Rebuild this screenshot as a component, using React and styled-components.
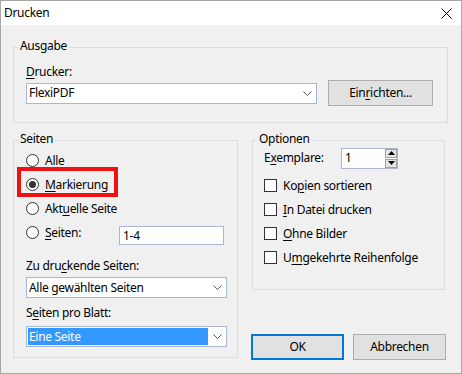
import React from "react";
import styled, { createGlobalStyle } from "styled-components";

const GlobalStyle = createGlobalStyle`
  html, body {
    margin: 0;
    padding: 0;
    background: #ffffff;
  }
  body {
    font-family: "Noto Sans", "Open Sans", sans-serif;
    font-size: 12px;
    letter-spacing: -0.3px;
    color: #000000;
  }
  * {
    box-sizing: border-box;
  }
`;

const Window = styled.div`
  width: 462px;
  height: 374px;
  border: 1px solid #a6a6a6;
  display: flex;
  flex-direction: column;
  background: #f0f0f0;
`;

const TitleBar = styled.div`
  height: 24px;
  background: #ffffff;
  display: flex;
  align-items: center;
  justify-content: space-between;
  padding: 0 9px 0 3px;
  line-height: 16px;
`;

const Body = styled.div`
  flex: 1;
  padding: 22px 13px 0 12px;
`;

const Group = styled.div`
  position: relative;
  border: 1px solid #dcdcdc;
  width: ${({ $w }) => ($w ? `${$w}px` : "auto")};
  height: ${({ $h }) => ($h ? `${$h}px` : "auto")};
  padding: ${({ $pad }) => $pad};
  margin-left: ${({ $ml }) => $ml || 0}px;
`;

const Legend = styled.div`
  position: absolute;
  top: -10px;
  left: 4px;
  padding: 0 2px;
  background: #f0f0f0;
  line-height: 16px;
`;

const Label = styled.div`
  line-height: 16px;
  height: 16px;
  margin-top: ${({ $mt }) => $mt || 0}px;
  width: ${({ $w }) => ($w ? `${$w}px` : "auto")};
  flex-shrink: 0;
`;

const Mn = styled.span`
  text-decoration: underline;
  text-underline-offset: 2px;
`;

const Row = styled.div`
  display: flex;
  align-items: center;
  gap: ${({ $gap }) => $gap || 0}px;
  height: ${({ $h }) => ($h ? `${$h}px` : "auto")};
  margin-top: ${({ $mt }) => $mt || 0}px;
`;

const LowerRow = styled.div`
  display: flex;
  gap: 13px;
  margin-top: 17px;
`;

const RightColumn = styled.div`
  width: 196px;
  display: flex;
  flex-direction: column;
`;

const SelectBox = styled.div`
  display: flex;
  align-items: stretch;
  width: ${({ $w }) => $w}px;
  height: 21px;
  border: 1px solid #a9b7d0;
  background: #ffffff;
  margin-top: ${({ $mt }) => $mt || 0}px;
`;

const SelectValue = styled.div`
  flex: 1;
  display: flex;
  align-items: center;
  padding-left: ${({ $sel }) => ($sel ? 1 : 2)}px;
  margin: ${({ $sel }) => ($sel ? "1px 0 1px 1px" : "0")};
  background: ${({ $sel }) => ($sel ? "#3399ff" : "transparent")};
  color: ${({ $sel }) => ($sel ? "#ffffff" : "#000000")};
  line-height: 16px;
`;

const Chevron = styled.div`
  width: 18px;
  display: flex;
  align-items: center;
  justify-content: center;
`;

const Button = styled.div`
  width: ${({ $w }) => $w}px;
  height: 26px;
  display: flex;
  align-items: center;
  justify-content: center;
  background: #e1e1e1;
  border: ${({ $def }) => ($def ? "2px solid #0078d7" : "1px solid #adadad")};
  margin-left: ${({ $ml }) => $ml || 0}px;
  line-height: 16px;
`;

const TextInput = styled.div`
  width: ${({ $w }) => $w}px;
  height: 19px;
  border: 1px solid #a9b7d0;
  background: #ffffff;
  padding-left: 3px;
  line-height: 17px;
  align-self: flex-start;
  margin: 6px 4px 0 auto;
`;

const RadioCircle = styled.span`
  width: 13px;
  height: 13px;
  border-radius: 50%;
  border: 1px solid #333333;
  background: #ffffff;
  display: flex;
  align-items: center;
  justify-content: center;
  flex-shrink: 0;
  &::after {
    content: "";
    width: 7px;
    height: 7px;
    border-radius: 50%;
    background: ${({ $on }) => ($on ? "#333333" : "transparent")};
  }
`;

const CheckBox = styled.span`
  width: 13px;
  height: 13px;
  border: 1px solid #333333;
  background: #ffffff;
  flex-shrink: 0;
`;

// red annotation frame drawn over the dialog
const Marker = styled.div`
  position: absolute;
  left: 3px;
  top: 26px;
  width: 101px;
  height: 30px;
  border: 4px solid #ee1111;
  pointer-events: none;
`;

const Spin = styled.div`
  width: 57px;
  height: 21px;
  border: 1px solid #a9b7d0;
  background: #ffffff;
  display: flex;
  align-items: stretch;
`;

const SpinValue = styled.div`
  flex: 1;
  padding-left: 3px;
  line-height: 18px;
`;

const SpinButtons = styled.div`
  width: 12px;
  display: flex;
  flex-direction: column;
  justify-content: center;
  gap: 1px;
`;

const SpinButton = styled.div`
  height: 9px;
  background: #e6e6e6;
  border: 1px solid #a0a0a0;
  display: flex;
  align-items: center;
  justify-content: center;
`;

const ButtonRow = styled.div`
  display: flex;
  margin-top: 44px;
`;

const ChevronIcon = () => (
  <svg width="9" height="5" viewBox="0 0 9 5">
    <polyline points="0.5,0.5 4.5,4.5 8.5,0.5" fill="none" stroke="#555" strokeWidth="1" />
  </svg>
);

const Select = ({ w, mt, sel, children }) => (
  <SelectBox $w={w} $mt={mt}>
    <SelectValue $sel={sel}>{children}</SelectValue>
    <Chevron>
      <ChevronIcon />
    </Chevron>
  </SelectBox>
);

const Radio = ({ on, children }) => (
  <Row $h={24} $gap={6}>
    <RadioCircle $on={on} />
    <span>{children}</span>
  </Row>
);

const Check = ({ children }) => (
  <Row $h={24} $gap={6}>
    <CheckBox />
    <span>{children}</span>
  </Row>
);

export default function App() {
  return (
    <>
      <GlobalStyle />
      <Window>
        <TitleBar>
          <span>Drucken</span>
          <svg width="11" height="11" viewBox="0 0 11 11">
            <path d="M0.5 0.5 L10.5 10.5 M10.5 0.5 L0.5 10.5" stroke="#000" strokeWidth="1" />
          </svg>
        </TitleBar>
        <Body>
          <Group $pad="16px 13px 16px 12px">
            <Legend>Ausgabe</Legend>
            <Label>
              <Mn>D</Mn>rucker:
            </Label>
            <Row>
              <Select w={291}>FlexiPDF</Select>
              <Button $w={105} $ml={11}>
                Ein<Mn>r</Mn>ichten...
              </Button>
            </Row>
          </Group>

          <LowerRow>
            <Group $w={225} $h={218} $pad="7px 9px 10px 12px">
              <Legend>Seiten</Legend>
              <Radio>
                <Mn>A</Mn>lle
              </Radio>
              <Radio on>
                <Mn>M</Mn>arkierung
              </Radio>
              <Radio>
                Akt<Mn>u</Mn>elle Seite
              </Radio>
              <Row $h={24} $gap={6}>
                <RadioCircle />
                <span>
                  <Mn>S</Mn>eiten:
                </span>
                <TextInput $w={105}>1-4</TextInput>
              </Row>
              <Label $mt={14}>
                Zu dru<Mn>c</Mn>kende Seiten:
              </Label>
              <Select w={201} mt={3}>Alle gewählten Seiten</Select>
              <Label $mt={7}>
                S<Mn>e</Mn>iten pro Blatt:
              </Label>
              <Select w={201} mt={5} sel>
                Eine Seite
              </Select>
              <Marker />
            </Group>

            <RightColumn>
              <Group $w={193} $h={150} $ml={1} $pad="6px 11px 20px 11px">
                <Legend>Optionen</Legend>
                <Row $h={22}>
                  <Label $w={77}>
                    E<Mn>x</Mn>emplare:
                  </Label>
                  <Spin>
                    <SpinValue>1</SpinValue>
                    <SpinButtons>
                      <SpinButton>
                        <svg width="7" height="4" viewBox="0 0 7 4">
                          <polygon points="0,4 7,4 3.5,0" fill="#000" />
                        </svg>
                      </SpinButton>
                      <SpinButton>
                        <svg width="7" height="4" viewBox="0 0 7 4">
                          <polygon points="0,0 7,0 3.5,4" fill="#000" />
                        </svg>
                      </SpinButton>
                    </SpinButtons>
                  </Spin>
                </Row>
                <Row $mt={4} />
                <Check>
                  Ko<Mn>p</Mn>ien sortieren
                </Check>
                <Check>
                  <Mn>I</Mn>n Datei drucken
                </Check>
                <Check>
                  <Mn>O</Mn>hne Bilder
                </Check>
                <Check>
                  U<Mn>m</Mn>gekehrte Reihenfolge
                </Check>
              </Group>
              <ButtonRow>
                <Button $w={93} $def>
                  OK
                </Button>
                <Button $w={93} $ml={9}>
                  Abbrechen
                </Button>
              </ButtonRow>
            </RightColumn>
          </LowerRow>
        </Body>
      </Window>
    </>
  );
}
